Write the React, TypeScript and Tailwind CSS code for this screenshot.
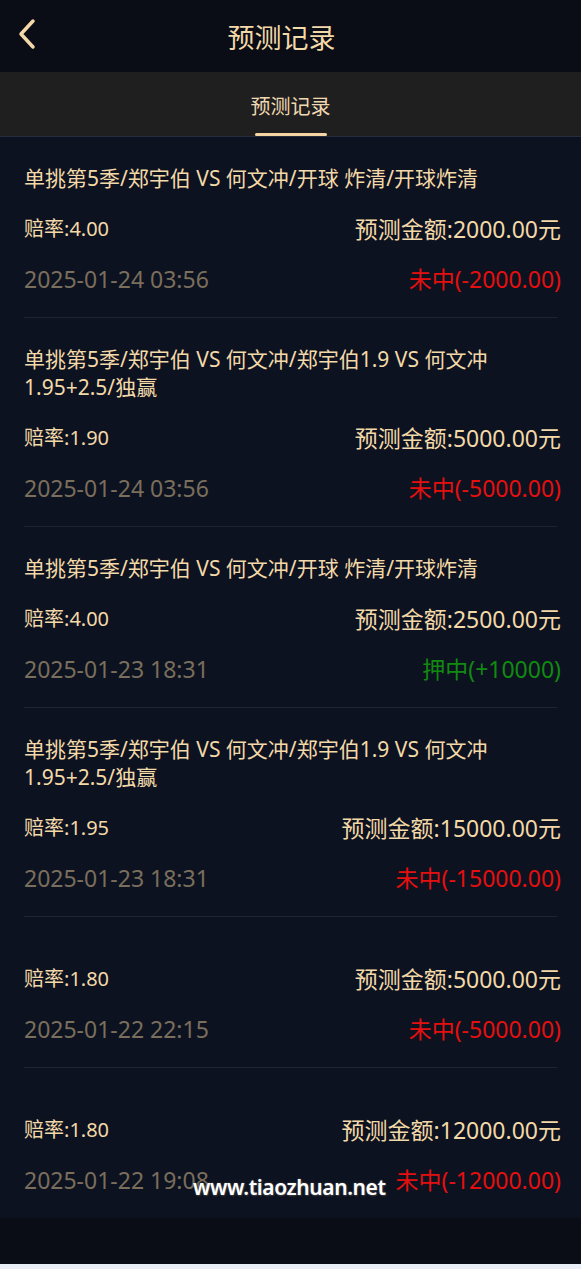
import React from 'react'

type Record = {
  title?: string
  odds: string
  amount: string
  time: string
  result: string
  win?: boolean
}

const records: Record[] = [
  {
    title: '单挑第5季/郑宇伯 VS 何文冲/开球 炸清/开球炸清',
    odds: '4.00',
    amount: '2000.00',
    time: '2025-01-24 03:56',
    result: '未中(-2000.00)',
  },
  {
    title: '单挑第5季/郑宇伯 VS 何文冲/郑宇伯1.9 VS 何文冲1.95+2.5/独赢',
    odds: '1.90',
    amount: '5000.00',
    time: '2025-01-24 03:56',
    result: '未中(-5000.00)',
  },
  {
    title: '单挑第5季/郑宇伯 VS 何文冲/开球 炸清/开球炸清',
    odds: '4.00',
    amount: '2500.00',
    time: '2025-01-23 18:31',
    result: '押中(+10000)',
    win: true,
  },
  {
    title: '单挑第5季/郑宇伯 VS 何文冲/郑宇伯1.9 VS 何文冲1.95+2.5/独赢',
    odds: '1.95',
    amount: '15000.00',
    time: '2025-01-23 18:31',
    result: '未中(-15000.00)',
  },
  {
    odds: '1.80',
    amount: '5000.00',
    time: '2025-01-22 22:15',
    result: '未中(-5000.00)',
  },
  {
    odds: '1.80',
    amount: '12000.00',
    time: '2025-01-22 19:08',
    result: '未中(-12000.00)',
  },
]

const font = { fontFamily: '"Noto Sans", "Noto Sans CJK SC", sans-serif' }

export default function App() {
  return (
    <div className="h-[1269px] w-full bg-[#0a0d15] flex flex-col overflow-hidden" style={font}>
      {/* Header */}
      <div className="relative h-[72px] bg-[#0a0c16] flex items-center justify-center shrink-0">
        <button className="absolute left-[14px] top-[18px] text-[#f3d9a8]">
          <svg width="28" height="32" viewBox="0 0 28 32" fill="none">
            <path d="M19 3 L7 16 L19 29" stroke="currentColor" strokeWidth="3.5" strokeLinecap="round" strokeLinejoin="round" />
          </svg>
        </button>
        <h1 className="text-[27px] text-[#f3d9a8] leading-none mr-[18px] mt-[2px]">预测记录</h1>
      </div>

      {/* Tabs */}
      <div className="h-[65px] bg-[#1f1f1f] border-b border-[#262c40] flex justify-center shrink-0">
        <div className="relative flex items-center px-[8px] pt-[5px]">
          <span className="text-[20px] text-[#f0d8b0] leading-none">预测记录</span>
          <div className="absolute bottom-0 left-1/2 -translate-x-1/2 w-[72px] h-[3px] rounded-full bg-[#f5d5a3]" />
        </div>
      </div>

      {/* List */}
      <div className="bg-[#0d1220] px-[24px] shrink-0">
        {records.map((r, i) => (
          <div
            key={i}
            className={`pt-[27px] pb-[13px] ${i < records.length - 1 ? 'border-b border-[#1e2436]' : ''}`}
          >
            {r.title ? (
              <div className="text-[21px] leading-[28px] text-[#f3d9a8] mb-3 pr-[20px]">{r.title}</div>
            ) : (
              <div className="h-[10px]" />
            )}
            <div className="h-[50px] -mr-[4px] flex items-center justify-between">
              <span className="text-[20px] text-[#f3d9a8]">赔率:{r.odds}</span>
              <span className="text-[23px] text-[#f3d9a8]">预测金额:{r.amount}元</span>
            </div>
            <div className="relative h-[50px] -mr-[4px] flex items-center justify-between pt-[1px]">
              <span className="text-[23px] text-[#7a6e5c]">{r.time}</span>
              <span className={`text-[23px] ${r.win ? 'text-[#118a11]' : 'text-[#e4100f]'}`}>{r.result}</span>
              {i === records.length - 1 && (
                <span
                  className="absolute left-[169px] top-[17px] text-[21px] font-semibold text-white tracking-[-0.4px]"
                  style={{ textShadow: '0 0 2px #555, 1px 1px 2px #333' }}
                >
                  www.tiaozhuan.net
                </span>
              )}
            </div>
          </div>
        ))}
      </div>

      <div className="h-[46px] bg-[#0a0d15] shrink-0" />
      <div className="flex-1 bg-[#e9edf5]" />
    </div>
  )
}
